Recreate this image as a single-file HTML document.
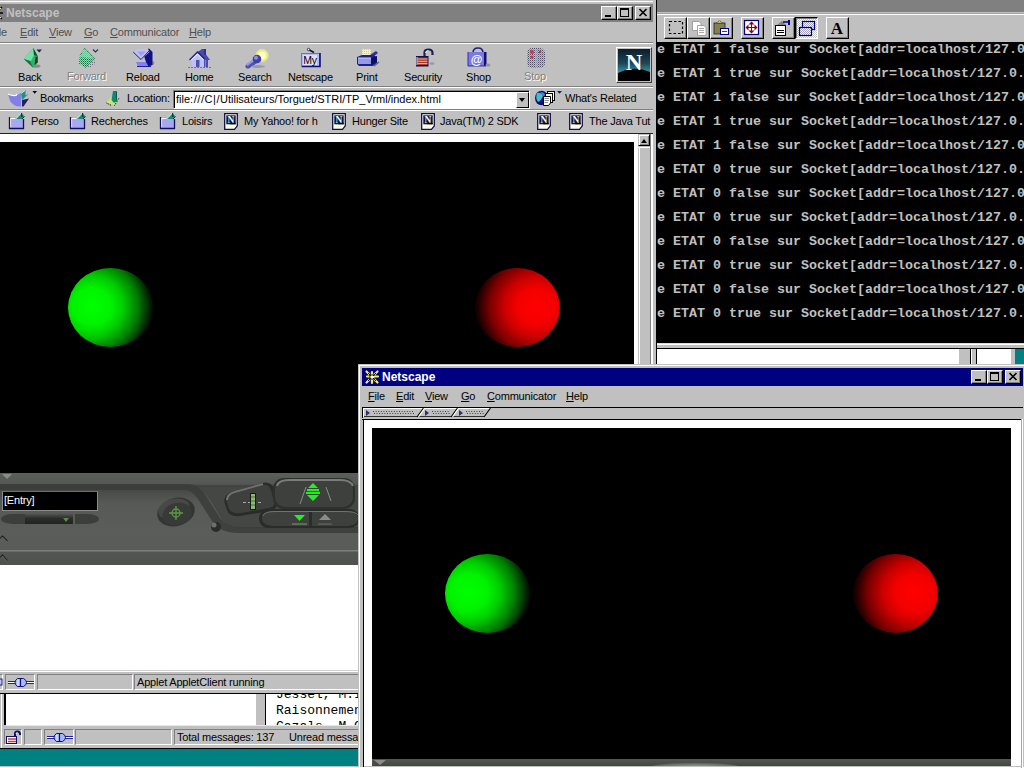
<!DOCTYPE html>
<html><head><meta charset="utf-8">
<style>
*{margin:0;padding:0;box-sizing:border-box}
html,body{width:1024px;height:768px;overflow:hidden;background:#c0c0c0;font-family:"Liberation Sans",sans-serif;font-size:11px;color:#000}
.a{position:absolute}
.t{position:absolute;white-space:pre;line-height:12px;letter-spacing:-0.2px}
.w{background:#fff}.k{background:#000}.g{background:#c0c0c0}.d{background:#808080}
.u{text-decoration:underline}
.con{position:absolute;left:657px;white-space:pre;font-family:"Liberation Mono",monospace;font-weight:bold;font-size:13.333px;line-height:12px;color:#c0c0c0}
.btn{position:absolute;width:16px;height:14px;background:#c0c0c0;border-top:1px solid #fff;border-left:1px solid #fff;border-right:1px solid #000;border-bottom:1px solid #000;box-shadow:inset -1px -1px 0 #808080}
.sunk{position:absolute;border-top:1px solid #808080;border-left:1px solid #808080;border-right:1px solid #fff;border-bottom:1px solid #fff}
.tb{position:absolute;width:23px;height:22px;background:#c0c0c0;border-top:1px solid #fff;border-left:1px solid #fff;border-right:1px solid #000;border-bottom:1px solid #000;box-shadow:inset -1px -1px 0 #808080}
</style></head><body>

<!-- ============ MAIL WINDOW (behind, bottom-left) ============ -->
<div class="a g" style="left:0;top:692px;width:360px;height:57px"></div>
<div class="a w" style="left:1px;top:692px;width:1px;height:56px"></div>
<div class="a k" style="left:4px;top:694px;width:2px;height:31px"></div>
<div class="a w" style="left:6px;top:694px;width:250px;height:31px"></div>
<div class="a w" style="left:6px;top:725px;width:352px;height:1px;opacity:.6"></div>
<div class="a k" style="left:265px;top:693px;width:1px;height:32px"></div>
<div class="a w" style="left:266px;top:693px;width:94px;height:32px"></div>
<div class="a" style="left:266px;top:693px;width:92px;height:32px;overflow:hidden"><div class="t" style="left:10px;top:-6px;font-family:'Liberation Mono',monospace;font-size:13px;line-height:16px;letter-spacing:0;color:#000">Jessel, M.I
Raisonnement
Cazals, M.C</div></div>
<div class="sunk" style="left:4px;top:729px;width:18px;height:16px"></div>
<div class="sunk" style="left:24px;top:729px;width:18px;height:16px"></div>
<div class="sunk" style="left:44px;top:729px;width:30px;height:16px"></div>
<div class="sunk" style="left:75px;top:729px;width:97px;height:16px"></div>
<div class="sunk" style="left:174px;top:729px;width:190px;height:16px"></div>
<div class="t" style="left:177px;top:731px">Total messages: 137</div>
<div class="t" style="left:289px;top:731px">Unread messa</div>
<svg class="a" style="left:5px;top:730px" width="17" height="15" viewBox="0 0 17 15"><path d="M10 6V3.5Q10 1.5 12.5 1.5Q15 1.5 15 4V5" fill="none" stroke="#101060" stroke-width="2"/><path d="M11 4Q11 2.5 12.5 2.5" fill="none" stroke="#fff" stroke-width=".8"/><rect x="1.5" y="6.5" width="10" height="7" fill="#fff" stroke="#101060"/><path d="M3 9H11M3 11.5H11" stroke="#c04040" stroke-width="1.3"/></svg>
<svg class="a" style="left:46px;top:731px" width="28" height="13" viewBox="0 0 28 13"><path d="M1 5.5H27M1 7.5H27" stroke="#2020a0" stroke-width="1"/><path d="M1 6.5H27" stroke="#fff" stroke-width="1"/><path d="M10.5 2.5H16.5Q19.5 4 19.5 6.5Q19.5 9 16.5 10.5H10.5Q8 9 8 6.5Q8 4 10.5 2.5Z" fill="#a8b8ff" stroke="#101080" stroke-width="1"/><path d="M11 3.5V9.5" stroke="#e8f0ff" stroke-width="1.2"/><path d="M13.5 2V11" stroke="#101080" stroke-width="1.2"/></svg>
<div class="a k" style="left:0;top:748px;width:360px;height:1px"></div>
<div class="a" style="left:0;top:749px;width:360px;height:17px;background:#008080"></div>
<div class="a" style="left:0;top:766px;width:1024px;height:1px;background:#c0c0c0"></div>
<div class="a w" style="left:0;top:767px;width:1024px;height:1px"></div>

<!-- ============ WINDOW 1 ============ -->
<div class="a g" style="left:0;top:0;width:656px;height:693px"></div>
<div class="a w" style="left:0;top:1px;width:653px;height:1px"></div>
<div class="a d" style="left:0;top:4px;width:653px;height:18px"></div>
<svg class="a" style="left:0;top:5px" width="4" height="16" viewBox="13 0 4 16"><g stroke="#000" stroke-width="1.3"><path d="M2 2L15 14M15 2L2 14M8.5 1V15M1 8H16"/></g><g stroke="#e8e8a0" stroke-width="1"><path d="M4 3L14 13M14 3L4 13"/></g></svg>
<div class="t" style="left:6px;top:7px;font-weight:bold;font-size:12px;color:#c0c0c0;letter-spacing:0">Netscape</div>
<div class="btn" style="left:601px;top:6px"></div>
<div class="btn" style="left:617px;top:6px"></div>
<div class="btn" style="left:635px;top:6px"></div>
<svg class="a" style="left:601px;top:6px" width="50" height="14" viewBox="0 0 50 14">
 <rect x="4" y="9" width="6" height="2" fill="#000"/>
 <rect x="19.5" y="2.5" width="8" height="8" fill="none" stroke="#000" stroke-width="1"/><rect x="19" y="2" width="9" height="2" fill="#000"/>
 <path d="M38.5 3L45.5 10M45.5 3L38.5 10" stroke="#000" stroke-width="1.6"/>
</svg>
<!-- menu -->
<div class="t" style="left:-10px;top:26px;color:#505050"><span class="u">F</span>ile</div>
<div class="t" style="left:20px;top:26px;color:#505050"><span class="u">E</span>dit</div>
<div class="t" style="left:49px;top:26px;color:#505050"><span class="u">V</span>iew</div>
<div class="t" style="left:84px;top:26px;color:#505050"><span class="u">G</span>o</div>
<div class="t" style="left:110px;top:26px;color:#505050"><span class="u">C</span>ommunicator</div>
<div class="t" style="left:189px;top:26px;color:#505050"><span class="u">H</span>elp</div>
<div class="a d" style="left:0;top:42px;width:653px;height:1px"></div>
<div class="a w" style="left:0;top:43px;width:653px;height:1px"></div>
<!-- toolbar labels -->
<div class="t" style="left:18px;top:71px">Back</div>
<div class="t" style="left:68px;top:71px;color:#fff">Forward</div>
<div class="t" style="left:67px;top:70px;color:#808080">Forward</div>
<div class="t" style="left:126px;top:71px">Reload</div>
<div class="t" style="left:185px;top:71px">Home</div>
<div class="t" style="left:238px;top:71px">Search</div>
<div class="t" style="left:288px;top:71px">Netscape</div>
<div class="t" style="left:356px;top:71px">Print</div>
<div class="t" style="left:404px;top:71px">Security</div>
<div class="t" style="left:466px;top:71px">Shop</div>
<div class="t" style="left:525px;top:71px;color:#fff">Stop</div>
<div class="t" style="left:524px;top:70px;color:#808080">Stop</div>
<!-- toolbar icons -->
<svg class="a" style="left:0;top:44px" width="656" height="90" viewBox="0 44 656 90">
 <defs>
  <pattern id="dith" width="2" height="2" patternUnits="userSpaceOnUse"><rect width="1" height="1" fill="#40a070"/><rect x="1" y="1" width="1" height="1" fill="#206040"/><rect x="1" width="1" height="1" fill="#90e0b8"/></pattern><pattern id="dithg" width="2" height="2" patternUnits="userSpaceOnUse"><rect width="1" height="1" fill="#707080"/></pattern>
  <pattern id="dith2" width="2" height="2" patternUnits="userSpaceOnUse"><rect width="1" height="1" fill="#303050"/><rect x="1" y="1" width="1" height="1" fill="#8080c0"/></pattern>
  <symbol id="fold" viewBox="0 0 16 16"><rect x="1" y="5" width="14" height="11" fill="#202070"/><rect x="1.5" y="5.5" width="12.5" height="9.5" fill="#b8b8f8"/><path d="M9 1L15 4L11 8Z" fill="#108060"/><path d="M9 1L12 3L11 8Z" fill="#30c090"/></symbol>
  <symbol id="npage" viewBox="0 0 14 17"><path d="M.7 .7H13.3V12.8L10.5 16.3H.7Z" fill="#fff" stroke="#101040" stroke-width="1.3"/><rect x="2.3" y="2.3" width="9.4" height="9" fill="#0a1838"/><path d="M6 11.3Q9 8 11.7 10V11.3Z" fill="#000"/><text x="7" y="9.6" font-family="Liberation Serif" font-weight="bold" font-size="9.5" fill="#f0f8ff" text-anchor="middle">N</text><rect x="2" y="12.3" width="7.5" height="2.6" fill="#ffffc8"/></symbol>
 </defs>
 <!-- back -->
 <ellipse cx="36" cy="66" rx="4.5" ry="1.8" fill="#8a8a8a"/>
 <path d="M33.3 48L23.8 59L33 67.4L37.7 62.5L37.7 56.2Z" fill="#30b068"/>
 <path d="M33.3 48L23.8 59L31 61L34 55Z" fill="#70e0a8"/>
 <path d="M33.3 48L37.7 56.2L34 55Z" fill="#0c5028"/>
 <path d="M37.7 56.2V62.5L34.5 65L35.5 57Z" fill="#0a4020"/>
 <path d="M23.8 59L33 67.4L30 61Z" fill="#1a7040"/>
 <path d="M36.5 49.5H42L39.2 52.5Z" fill="#202050"/>
 <!-- forward -->
 <path d="M85 67.5L94 60L96 63L90 68Z" fill="url(#dithg)"/>
 <path d="M84.5 48.2L94.5 58.4L85.6 67.4L79 63.5L80 54Z" fill="url(#dith)"/>
 <path d="M84.5 48.2L94.5 58.4L80 57Z" fill="#80e0b0" opacity=".75"/>
 <path d="M84.5 48.2L94.5 58.4L85.6 67.4" fill="none" stroke="#205030" stroke-width=".9" stroke-dasharray="1 1"/>
 <path d="M93 49.5L95.5 52L98 49.5" fill="none" stroke="#303050" stroke-width="1.1"/>
 <!-- reload -->
 <ellipse cx="152" cy="63" rx="2.5" ry="2" fill="#909090"/>
 <path d="M136 62H147L151 66.5H138Z" fill="#8080f0"/>
 <path d="M137 66.5H151" stroke="#2020a0" stroke-width="1"/>
 <path d="M146 50L149 48.5L152.5 52V65L148.5 66.5L146 62L144 56Z" fill="#10108a"/>
 <path d="M133.2 52L138 49H148L149.5 52L141 59.5Z" fill="#c0c0f8"/>
 <path d="M133.2 52L141 59.5L149 51" fill="none" stroke="#202060" stroke-width="1"/>
 <path d="M137 51.5H146L141 56Z" fill="#9090e8" opacity=".7"/>
 <!-- home -->
 <path d="M189.5 60L197.5 52L204 58.5V67H192V60Z" fill="#c0c0ff"/>
 <path d="M204 58.5L197.5 52L202 49H205V53L210 60H208V67H204Z" fill="#4848b0"/>
 <path d="M189.5 60L197.5 52L204.5 59" fill="none" stroke="#202070" stroke-width="1.3"/>
 <path d="M191 60.5L197.5 54L203.5 60" fill="none" stroke="#fff" stroke-width=".8"/>
 <rect x="204" y="49" width="2" height="6" fill="#303090"/>
 <rect x="196" y="60" width="3.5" height="7" fill="#5050a8"/>
 <path d="M205.5 60V67" stroke="#8080e0" stroke-width="1.2"/>
 <path d="M188 67.5H211" stroke="#608870" stroke-width="1.2" stroke-dasharray="2 1"/>
 <!-- search -->
 <circle cx="262" cy="55.5" r="6.5" fill="#f0f080" opacity=".9"/>
 <circle cx="262" cy="55.5" r="4" fill="#ffffc0"/>
 <path d="M245.5 65.5L255 58L258.5 62L249 68.5Q245 69 245.5 65.5Z" fill="#5050b0"/>
 <path d="M246 64L255.5 57.5L257 59L247.5 66Z" fill="#9898e8"/>
 <circle cx="257" cy="59" r="4.3" fill="#4040a0"/>
 <circle cx="256" cy="57.8" r="2" fill="#9090e0"/>
 <ellipse cx="258" cy="66.5" rx="7" ry="1.5" fill="#9a9aaa"/>
 <!-- my netscape -->
 <path d="M308.5 49.5L314 52.5" stroke="#101030" stroke-width="1.6"/><circle cx="308.5" cy="49.5" r="1.2" fill="#fff" stroke="#101030" stroke-width=".8"/>
 <rect x="301.5" y="53.5" width="18" height="13" fill="#b8b8f8" stroke="#7070d0" stroke-width="1"/>
 <path d="M302 66.5H320V53" stroke="#101070" stroke-width="1.6" fill="none"/>
 <rect x="303" y="55" width="14" height="10" fill="#e0e0ff"/>
 <text x="310" y="63.5" font-family="Liberation Sans" font-size="10.5" fill="#000" text-anchor="middle" letter-spacing="-.3">My</text>
 <!-- print -->
 <path d="M362 49H371V55H362Z" fill="#f0f0c0"/>
 <path d="M362 49.5H371M362 51.5H371M362 53.5H371" stroke="#c8c8a0" stroke-width=".8" stroke-dasharray="1 1"/>
 <path d="M370 55L376 51L378 53L373 57Z" fill="#3030a0"/>
 <path d="M357 57L362 55H373L377 57V63L373 66H359L357 64Z" fill="#20208a"/>
 <path d="M358 58H371V64H358Z" fill="#9898e8"/>
 <path d="M358 58H371" stroke="#d0d0ff" stroke-width="1"/>
 <path d="M371 58L377 56V62L371 65Z" fill="#101060"/>
 <rect x="369" y="61" width="1.5" height="1.5" fill="#30c0a0"/>
 <path d="M374 66L379 62" stroke="#606070" stroke-width="1.5"/>
 <!-- security -->
 <path d="M424.5 56V52.5Q424.5 49.5 428.5 49.5Q432.5 49.5 432.5 53V55" fill="none" stroke="#202050" stroke-width="2.2"/>
 <path d="M425.5 53Q426 50.5 428.5 50.5" fill="none" stroke="#fff" stroke-width=".9"/>
 <ellipse cx="432" cy="63.5" rx="2.5" ry="1.3" fill="#9898b0"/>
 <rect x="416" y="56" width="12.5" height="10.5" fill="#101058"/>
 <rect x="417.5" y="57.5" width="10" height="7.5" fill="#a83828"/>
 <path d="M417.5 59H427.5M417.5 61.3H427.5M417.5 63.6H427.5" stroke="#e8b888" stroke-width="1"/>
 <path d="M417 57V65" stroke="#f0e0e0" stroke-width="1"/>
 <!-- shop -->
 <path d="M473 53Q473 48 478 48Q483 48 483 53" fill="none" stroke="#202080" stroke-width="1.6"/>
 <path d="M468 52H486V66H468Z" fill="#7878e8"/>
 <path d="M484 52H486.5V66H484Z" fill="#101070"/>
 <path d="M468 52V66H486" fill="none" stroke="#3030a0" stroke-width="1"/>
 <text x="476.5" y="63.5" font-family="Liberation Sans" font-weight="bold" font-size="12" fill="#fff" text-anchor="middle">@</text>
 <ellipse cx="488" cy="65" rx="2.5" ry="1.5" fill="#9090a8"/>
 <!-- stop -->
 <rect x="527" y="48" width="18" height="20" rx="5" fill="url(#dith2)" opacity=".8"/>
 <g fill="#e03040"><circle cx="532" cy="52" r="2"/><circle cx="532" cy="57" r="1.6"/><circle cx="540" cy="52" r="1.3"/></g>
 <path d="M536 49V67" stroke="#b0b0d0" stroke-width="1.5" opacity=".8"/>
 <!-- location row -->
 <path d="M8 94Q12 96 16 95.5L21 93V106.5Q14 107 10 101Z" fill="#8080e8"/>
 <path d="M8 94Q12 96 16 95.5L17 94" fill="none" stroke="#fff" stroke-width="1.2"/>
 <path d="M21 93L25.5 90L25.5 95.5L29 93.5L22 100Z" fill="#209080"/>
 <path d="M21 93.5L25 90.5" stroke="#e0fff0" stroke-width=".8"/>
 <path d="M22 100L29 98.5L23.5 106.5H22Z" fill="#202068"/>
 <path d="M32.5 91H37L34.7 93.8Z" fill="#000"/>
 <path d="M106.5 102.5L111 97L119 98.5L115 105.5Z" fill="#c8e870"/>
 <path d="M113 91H117V101L114 103L111.5 100Z" fill="#108878"/>
 <path d="M106.5 103L111.5 105.5M114.5 105.5L119 98" stroke="#000" stroke-width="1" stroke-dasharray="1 1"/>
 <path d="M116.5 92.5V100" stroke="#000" stroke-width=".8" stroke-dasharray="1 1"/>
 <ellipse cx="541.5" cy="98" rx="6.5" ry="7.3" fill="#101070"/>
 <path d="M537 93Q541 92 543 96Q541 101 538 102Q535 98 537 93Z" fill="#40c0c0"/>
 <path d="M540 91.5Q544 92 546 95L543 96Z" fill="#5080e0"/>
 <rect x="547.5" y="91.5" width="7" height="9" fill="#fff" stroke="#000" stroke-width="1"/>
 <rect x="545.5" y="93.5" width="7" height="9" fill="#fff" stroke="#000" stroke-width="1"/>
 <path d="M543.5 96.5H550.5V103L548.5 105.5H543.5Z" fill="#fff" stroke="#000" stroke-width="1"/>
 <path d="M544.5 98.5H549M544.5 100.5H549M544.5 102.5H548" stroke="#707070" stroke-width=".8"/>
 <path d="M557 91H562L559.5 93.8Z" fill="#202050"/>
 <!-- bookmark bar -->
<g transform="translate(0,0)">
 <path d="M9 117H15.5L16 119H24V129H9Z" fill="#a8a8f0"/>
 <path d="M10.5 127.5V118.5H15" stroke="#fff" stroke-width="1.2" fill="none"/>
 <path d="M9.5 117V129M9 128.5H24M23.5 119V129" stroke="#101060" stroke-width="1.3" fill="none"/>
 <path d="M15.5 119L21.5 113L24.5 116.5L22 119Z" fill="#188878"/>
 <path d="M15.5 119L21.5 113" stroke="#e8fff8" stroke-width=".9"/>
 <path d="M21.5 113L22 117M24.5 116.5L22 119" stroke="#003020" stroke-width="1"/>
</g>
<g transform="translate(61,0)">
 <path d="M9 117H15.5L16 119H24V129H9Z" fill="#a8a8f0"/>
 <path d="M10.5 127.5V118.5H15" stroke="#fff" stroke-width="1.2" fill="none"/>
 <path d="M9.5 117V129M9 128.5H24M23.5 119V129" stroke="#101060" stroke-width="1.3" fill="none"/>
 <path d="M15.5 119L21.5 113L24.5 116.5L22 119Z" fill="#188878"/>
 <path d="M15.5 119L21.5 113" stroke="#e8fff8" stroke-width=".9"/>
 <path d="M21.5 113L22 117M24.5 116.5L22 119" stroke="#003020" stroke-width="1"/>
</g>
<g transform="translate(151,0)">
 <path d="M9 117H15.5L16 119H24V129H9Z" fill="#a8a8f0"/>
 <path d="M10.5 127.5V118.5H15" stroke="#fff" stroke-width="1.2" fill="none"/>
 <path d="M9.5 117V129M9 128.5H24M23.5 119V129" stroke="#101060" stroke-width="1.3" fill="none"/>
 <path d="M15.5 119L21.5 113L24.5 116.5L22 119Z" fill="#188878"/>
 <path d="M15.5 119L21.5 113" stroke="#e8fff8" stroke-width=".9"/>
 <path d="M21.5 113L22 117M24.5 116.5L22 119" stroke="#003020" stroke-width="1"/>
</g>
 <use href="#npage" x="224" y="113" width="14" height="17"/>
 <use href="#npage" x="332" y="113" width="14" height="17"/>
 <use href="#npage" x="421" y="113" width="14" height="17"/>
 <use href="#npage" x="537" y="113" width="14" height="17"/>
 <use href="#npage" x="569" y="113" width="14" height="17"/>
</svg>
<!-- N logo -->
<div class="a" style="left:616px;top:47px;width:36px;height:36px;border-top:1px solid #fff;border-left:1px solid #fff;border-right:1px solid #404040;border-bottom:1px solid #404040;background:#c0c0c0"></div>
<svg class="a" style="left:618px;top:49px" width="32" height="32" viewBox="0 0 32 32">
 <defs><linearGradient id="sky" x1="0" y1="0" x2="0" y2="1"><stop offset="0" stop-color="#0c1c2c"/><stop offset=".45" stop-color="#1c4858"/><stop offset=".75" stop-color="#3a9aa8"/><stop offset="1" stop-color="#3a9aa8"/></linearGradient></defs>
 <rect width="32" height="32" fill="url(#sky)"/>
 <path d="M0 24 Q16 16 32 23 V32 H0Z" fill="#000"/>
 <text x="16" y="21" font-family="Liberation Serif" font-weight="bold" font-size="23" fill="#fff" text-anchor="middle">N</text>
</svg>
<div class="a d" style="left:0;top:86px;width:653px;height:1px"></div>
<div class="a w" style="left:0;top:87px;width:653px;height:1px"></div>
<!-- location bar -->
<div class="t" style="left:40px;top:92px">Bookmarks</div>
<div class="t" style="left:127px;top:92px">Location:</div>
<div class="a" style="left:173px;top:90px;width:357px;height:19px;background:#fff;border-top:1px solid #808080;border-left:1px solid #808080;border-right:1px solid #fff;border-bottom:1px solid #fff;box-shadow:inset 1px 1px 0 #000"></div>
<div class="t" style="left:176px;top:93px;letter-spacing:0">file<span style="letter-spacing:.55px">:///C|/</span>Utilisateurs/Torguet/STRI/TP_Vrml/index.html</div>
<div class="a" style="left:516px;top:92px;width:13px;height:16px;background:#c0c0c0;border-top:1px solid #fff;border-left:1px solid #fff;border-right:1px solid #000;border-bottom:1px solid #000"></div>
<div class="a" style="left:519px;top:98px;width:0;height:0;border-left:3.5px solid transparent;border-right:3.5px solid transparent;border-top:4px solid #000"></div>
<div class="t" style="left:565px;top:92px">What's Related</div>
<div class="a d" style="left:0;top:109px;width:653px;height:1px"></div>
<div class="a w" style="left:0;top:110px;width:653px;height:1px"></div>
<!-- bookmarks bar -->
<div class="t" style="left:31px;top:115px">Perso</div>
<div class="t" style="left:91px;top:115px">Recherches</div>
<div class="t" style="left:182px;top:115px">Loisirs</div>
<div class="t" style="left:244px;top:115px">My Yahoo! for h</div>
<div class="t" style="left:352px;top:115px">Hunger Site</div>
<div class="t" style="left:440px;top:115px">Java(TM) 2 SDK</div>
<div class="t" style="left:589px;top:115px">The Java Tut</div>
<div class="a" style="left:0;top:133px;width:653px;height:1px;background:#202020"></div>
<!-- content -->
<div class="a w" style="left:0;top:134px;width:638px;height:537px"></div>
<div class="a k" style="left:0;top:142px;width:634px;height:331px"></div>
<div class="a" style="left:68px;top:268px;width:85px;height:79px;border-radius:50%;background:radial-gradient(ellipse 74% 76% at 28% 48%,#00ff00 0%,#00f400 30%,#00cc00 50%,#007a00 74%,#002000 92%,#000800 100%)"></div>
<div class="a" style="left:475px;top:268px;width:85px;height:79px;border-radius:50%;background:radial-gradient(ellipse 74% 76% at 72% 49%,#ff0000 0%,#f40000 30%,#cc0000 50%,#7a0000 74%,#200000 92%,#080000 100%)"></div>
<!-- cosmo nav bar win1 -->
<div class="a" style="left:0;top:473px;width:634px;height:92px;background:linear-gradient(#5c5f5b 0px,#545753 11px,#3e413d 13px,#464945 16px,#565955 30px,#5a5d59 60px,#585b57 77px,#7c7f7a 77px,#7c7f7a 78px,#525551 79px,#4e514d 92px)"></div>
<div class="a" style="left:2px;top:474px;width:0;height:0;border-left:5px solid transparent;border-right:5px solid transparent;border-top:5px solid #8a8c88"></div>
<div class="a" style="left:2px;top:491px;width:96px;height:20px;background:#000;border:1px solid #8a8c88;border-top-color:#6a6c68"></div>
<div class="t" style="left:4px;top:494px;color:#fff">[Entry]</div>
<div class="a" style="left:1px;top:514px;width:24px;height:10px;background:#3c3e3b;border-radius:50% 0 0 50%"></div>
<div class="a" style="left:25px;top:513px;width:48px;height:11px;background:linear-gradient(#5a5c58,#2a2c2a 50%,#222422)"></div>
<div class="a" style="left:63px;top:518px;width:0;height:0;border-left:3.5px solid transparent;border-right:3.5px solid transparent;border-top:4px solid #5a8a50"></div>
<div class="a" style="left:75px;top:514px;width:24px;height:10px;background:#3c3e3b;border-radius:0 50% 50% 0"></div>
<svg class="a" style="left:0;top:532px" width="10" height="32" viewBox="0 532 10 32"><path d="M-1 539.5L2.5 536L7.5 541M-1 558.5L2.5 555L7.5 560.5" fill="none" stroke="#1a1c1a" stroke-width="1.1"/><path d="M-1 540.5L2.5 537L7.5 542M-1 559.5L2.5 556L7.5 561.5" fill="none" stroke="#7a7d79" stroke-width=".7" opacity=".6"/></svg>

<svg class="a" style="left:0;top:473px" width="358" height="91" viewBox="0 473 358 91">
 <path d="M195 487 Q205 490 212 503 L222 520 Q228 528 240 528 L358 528 L358 486 Z" fill="#454744"/>
 <path d="M0 484 L188 484 Q198 484 206 496 L220 518 Q226 527 240 527 L358 527 L358 533 L238 533 Q220 533 212 521 L198 499 Q192 490 184 490 L0 490 Z" fill="#3a3c39" opacity=".85"/>
 <ellipse cx="176" cy="512" rx="19" ry="14" transform="rotate(-15 176 512)" fill="#333532"/>
 <ellipse cx="174" cy="509" rx="16" ry="10" transform="rotate(-15 174 509)" fill="#5c5e5a" opacity=".5"/>
 <ellipse cx="177" cy="514" rx="15" ry="11" transform="rotate(-15 177 514)" fill="#383a37"/>
 <g stroke="#5a9a4a" stroke-width="1.3" fill="none"><circle cx="176" cy="513" r="4"/><path d="M169 513H183M176 506V520"/></g>
 <circle cx="216" cy="527" r="5" fill="#2a2c29"/><circle cx="214" cy="525" r="2.5" fill="#6e706c"/>
 <path d="M225 504 Q222 495 232 492 L262 483 Q271 481 274 489 L277 502 Q278 509 270 511 L240 516 Q229 517 227 510 Z" fill="#2a2c29"/>
 <path d="M227 503 Q225 496 233 494 L262 485 Q269 484 271 490 L274 502 Q275 507 269 508 L241 513 Q231 514 229 509 Z" fill="#3e403d"/>
 <path d="M227 500 Q227 494 235 492 L263 484" stroke="#80827e" stroke-width="2" fill="none" opacity=".8"/>
 <path d="M243 502.5H261" stroke="#a8aaa6" stroke-width="1" stroke-dasharray="3 2"/>
 <rect x="250.5" y="493.5" width="5" height="16" fill="#90b878" stroke="#10200a" stroke-width="1"/>
 <path d="M251 497H255M251 501H255M251 505H255" stroke="#4a6a38" stroke-width="1"/>
 <rect x="273" y="478" width="82" height="31" rx="11" fill="#2e302d"/>
 <rect x="275" y="479" width="78" height="28" rx="10" fill="#3e403d"/>
 <path d="M277 486 Q278 480 290 480 H340 Q351 480 353 486" stroke="#858783" stroke-width="2" fill="none" opacity=".85"/>
 <path d="M300 504L306 487M326 487L331 501" stroke="#8a8c88" stroke-width="1"/>
 <path d="M313 483L308 488H318Z M307 489H319V491H307Z M306 492H320V494H306Z M307 495H319L313 501Z" fill="#22ee22"/>
 <rect x="259" y="509" width="100" height="19" rx="9" fill="#2a2c29"/>
 <path d="M262 518 Q262 511 275 511 H309 V526 H275 Q262 526 262 518Z" fill="#3e403d"/>
 <path d="M312 511 H345 Q358 511 358 518 Q358 526 345 526 H312Z" fill="#3e403d"/>
 <path d="M263 516 Q264 511.5 275 511.5 H345 Q356 511.5 358 515" stroke="#70726e" stroke-width="1" fill="none"/>
 <path d="M294 515H305L299.5 521Z" fill="#22ee22"/><path d="M292 524H307" stroke="#7a9a70"/>
 <path d="M319 520H331L325 514Z" fill="#8a8c88"/><path d="M318 524H332" stroke="#6a6c68"/>
</svg>
<!-- scrollbar -->
<div class="a g" style="left:638px;top:134px;width:12px;height:537px"></div>
<div class="a" style="left:638px;top:134px;width:12px;height:12px;background:#c0c0c0;border-top:1px solid #c0c0c0;border-left:1px solid #c0c0c0;border-right:1px solid #000;border-bottom:1px solid #000;box-shadow:inset 1px 1px 0 #fff,inset -1px -1px 0 #808080"></div>
<div class="a" style="left:641px;top:139px;width:0;height:0;border-left:3.5px solid transparent;border-right:3.5px solid transparent;border-bottom:4px solid #000"></div>
<div class="a w" style="left:639px;top:147px;width:1px;height:524px"></div>
<div class="a w" style="left:638px;top:147px;width:12px;height:1px"></div>
<div class="a d" style="left:650px;top:134px;width:1px;height:537px"></div>
<div class="a w" style="left:651px;top:134px;width:2px;height:558px"></div>
<div class="a k" style="left:656px;top:0;width:1px;height:365px"></div>
<!-- status bar -->
<div class="a" style="left:0;top:670px;width:638px;height:1px;background:#d0d0d0"></div>
<div class="a w" style="left:0;top:671px;width:653px;height:1px"></div>
<div class="sunk" style="left:-14px;top:674px;width:17px;height:16px"></div>
<svg class="a" style="left:0;top:677px" width="3" height="9" viewBox="0 0 3 9"><rect x="-4" y="2" width="6" height="6" fill="#c0c0ff" stroke="#202070"/></svg>
<div class="sunk" style="left:5px;top:674px;width:30px;height:16px"></div>
<div class="sunk" style="left:37px;top:674px;width:96px;height:16px"></div>
<div class="sunk" style="left:134px;top:674px;width:520px;height:16px"></div>
<div class="t" style="left:137px;top:676px">Applet AppletClient running</div>
<svg class="a" style="left:7px;top:676px" width="28" height="13" viewBox="0 0 28 13"><path d="M1 5.5H27M1 7.5H27" stroke="#2020a0" stroke-width="1"/><path d="M1 6.5H27" stroke="#fff" stroke-width="1"/><path d="M10.5 2.5H16.5Q19.5 4 19.5 6.5Q19.5 9 16.5 10.5H10.5Q8 9 8 6.5Q8 4 10.5 2.5Z" fill="#a8b8ff" stroke="#101080" stroke-width="1"/><path d="M11 3.5V9.5" stroke="#e8f0ff" stroke-width="1.2"/><path d="M13.5 2V11" stroke="#101080" stroke-width="1.2"/></svg>

<div class="a k" style="left:0;top:693px;width:358px;height:1px"></div>

<!-- ============ CONSOLE WINDOW ============ -->
<div class="a d" style="left:657px;top:0;width:367px;height:12px"></div>
<div class="a g" style="left:657px;top:12px;width:367px;height:30px"></div>
<div class="a" style="left:657px;top:13px;width:367px;height:1px;background:#a0a0a0"></div>
<div class="a w" style="left:657px;top:14px;width:367px;height:1px"></div>
<div class="tb" style="left:664px;top:17px"></div>
<div class="tb" style="left:687px;top:17px"></div>
<div class="tb" style="left:710px;top:17px"></div>
<div class="tb" style="left:741px;top:17px"></div>
<div class="tb" style="left:772px;top:17px"></div>
<div class="a" style="left:795px;top:17px;width:23px;height:22px;border-top:1px solid #000;border-left:1px solid #000;border-right:1px solid #fff;border-bottom:1px solid #fff;box-shadow:inset 1px 1px 0 #808080;background:repeating-conic-gradient(#fff 0 25%,#c0c0c0 0 50%) 0 0/2px 2px"></div>
<div class="tb" style="left:826px;top:17px"></div>
<svg class="a" style="left:657px;top:15px" width="200" height="27" viewBox="657 15 200 27">
 <defs><pattern id="dith3" width="2" height="2" patternUnits="userSpaceOnUse"><rect width="2" height="2" fill="#fff"/><rect width="1" height="1" fill="#a0a0c0"/><rect x="1" y="1" width="1" height="1" fill="#a0a0c0"/></pattern></defs>
 <rect x="669.5" y="21.5" width="13" height="12" fill="none" stroke="#000" stroke-width="1.2" stroke-dasharray="2.5 2"/>
 <g fill="#fff" stroke="#909090" stroke-width=".8"><path d="M692.5 21.5H699L701 23.5V30.5H692.5Z"/><path d="M697.5 25.5H704L706 27.5V35.5H697.5Z"/></g>
 <g stroke="#909090" stroke-width=".8"><path d="M699 28.5H704M699 30.5H704M699 32.5H704"/></g>
 <rect x="714" y="23" width="11" height="11" fill="#808050" stroke="#202020" stroke-width=".8"/>
 <path d="M716.5 23Q719.5 19 722.5 23Z" fill="#ffff80" stroke="#404020" stroke-width=".7"/>
 <rect x="720.5" y="28.5" width="8" height="6" fill="#fff" stroke="#000080" stroke-width="1"/>
 <path d="M722 31.5H727" stroke="#000080" stroke-width=".8"/>
 <rect x="744.5" y="20.5" width="14" height="14" fill="#fff" stroke="#000080" stroke-width="1.2"/>
 <g fill="#900000"><path d="M751.5 21.5L748.5 24.5H754.5Z"/><path d="M751.5 33.5L748.5 30.5H754.5Z"/><path d="M745.5 27.5L748.5 24.5V30.5Z"/><path d="M757.5 27.5L754.5 24.5V30.5Z"/></g>
 <path d="M751.5 24V31M748 27.5H755" stroke="#900000" stroke-width="1"/>
 <rect x="775.5" y="25.5" width="10" height="10" fill="#fff" stroke="#000" stroke-width="1"/>
 <path d="M777 30.5H784M777 32.5H784" stroke="#000" stroke-width="1"/>
 <path d="M777 25L782 21L786 25Z" fill="#808080"/>
 <path d="M783 22H789" stroke="#000080" stroke-width="1.5"/><rect x="788" y="20" width="2" height="5" fill="#000080"/>
 <rect x="802.5" y="21.5" width="12" height="8" fill="url(#dith3)" stroke="#000080" stroke-width="1.2"/>
 <rect x="799.5" y="27.5" width="12" height="8" fill="url(#dith3)" stroke="#000080" stroke-width="1.2"/>
 <text x="837" y="34" font-family="Liberation Serif" font-weight="bold" font-size="17" fill="#000" text-anchor="middle">A</text>
</svg>
<div class="a k" style="left:657px;top:42px;width:367px;height:301px"></div>
<div class="con" style="top:44px">e ETAT 1 false sur Socket[addr=localhost/127.0</div>
<div class="con" style="top:68px">e ETAT 1 true sur Socket[addr=localhost/127.0.</div>
<div class="con" style="top:92px">e ETAT 1 false sur Socket[addr=localhost/127.0</div>
<div class="con" style="top:116px">e ETAT 1 true sur Socket[addr=localhost/127.0.</div>
<div class="con" style="top:140px">e ETAT 1 false sur Socket[addr=localhost/127.0</div>
<div class="con" style="top:164px">e ETAT 0 true sur Socket[addr=localhost/127.0.</div>
<div class="con" style="top:188px">e ETAT 0 false sur Socket[addr=localhost/127.0</div>
<div class="con" style="top:212px">e ETAT 0 true sur Socket[addr=localhost/127.0.</div>
<div class="con" style="top:236px">e ETAT 0 false sur Socket[addr=localhost/127.0</div>
<div class="con" style="top:260px">e ETAT 0 true sur Socket[addr=localhost/127.0.</div>
<div class="con" style="top:284px">e ETAT 0 false sur Socket[addr=localhost/127.0</div>
<div class="con" style="top:308px">e ETAT 0 true sur Socket[addr=localhost/127.0.</div>
<div class="a" style="left:657px;top:343px;width:367px;height:1px;background:#dcdcdc"></div>
<div class="a w" style="left:657px;top:344px;width:367px;height:1px"></div>
<div class="a k" style="left:657px;top:348px;width:367px;height:1px"></div>
<div class="a w" style="left:657px;top:349px;width:302px;height:15px"></div>
<div class="a k" style="left:970px;top:349px;width:1px;height:15px"></div>
<div class="a w" style="left:971px;top:349px;width:1px;height:15px"></div>
<div class="a k" style="left:976px;top:349px;width:1px;height:15px"></div>
<div class="a w" style="left:977px;top:349px;width:34px;height:15px"></div>
<div class="a" style="left:1015px;top:349px;width:9px;height:15px;background:#008080"></div>

<!-- ============ WINDOW 2 ============ -->
<div class="a g" style="left:358px;top:364px;width:666px;height:404px"></div>
<div class="a w" style="left:359px;top:365px;width:665px;height:1px"></div>
<div class="a w" style="left:359px;top:365px;width:1px;height:403px"></div>
<div class="a" style="left:362px;top:368px;width:661px;height:18px;background:#000080"></div>
<div class="t" style="left:382px;top:371px;font-weight:bold;font-size:12px;color:#fff;letter-spacing:0">Netscape</div>
<div class="btn" style="left:971px;top:370px"></div>
<div class="btn" style="left:987px;top:370px"></div>
<div class="btn" style="left:1005px;top:370px"></div>
<svg class="a" style="left:971px;top:370px" width="50" height="14" viewBox="0 0 50 14">
 <rect x="4" y="9" width="6" height="2" fill="#000"/>
 <rect x="19.5" y="2.5" width="8" height="8" fill="none" stroke="#000" stroke-width="1"/><rect x="19" y="2" width="9" height="2" fill="#000"/>
 <path d="M38.5 3L45.5 10M45.5 3L38.5 10" stroke="#000" stroke-width="1.6"/>
</svg>
<div class="t" style="left:368px;top:390px"><span class="u">F</span>ile</div>
<div class="t" style="left:396px;top:390px"><span class="u">E</span>dit</div>
<div class="t" style="left:425px;top:390px"><span class="u">V</span>iew</div>
<div class="t" style="left:461px;top:390px"><span class="u">G</span>o</div>
<div class="t" style="left:487px;top:390px"><span class="u">C</span>ommunicator</div>
<div class="t" style="left:566px;top:390px"><span class="u">H</span>elp</div>
<div class="a k" style="left:362px;top:407px;width:661px;height:1px"></div>
<div class="a k" style="left:362px;top:419px;width:659px;height:1px"></div>
<!-- tabs strip -->
<svg class="a" style="left:362px;top:408px" width="140" height="11" viewBox="362 408 140 11">
 <path d="M363 408H423L417 417H363Z" fill="#c0c0c0"/>
 <path d="M424 408H457L451 417H418Z" fill="#c0c0c0"/>
 <path d="M458 408H490L484 417H452Z" fill="#c0c0c0"/>
 <path d="M363 408.5H490" stroke="#fff" stroke-width="1"/>
 <path d="M363 416.5H484" stroke="#303030" stroke-width="1"/>
 <path d="M363.5 408V417" stroke="#fff" stroke-width="1"/>
 <path d="M362.5 408V418" stroke="#000" stroke-width="1"/>
 <g stroke-width="1.1"><path d="M423.5 408L417 417" stroke="#000"/><path d="M424.5 408.5L418.5 417" stroke="#fff"/>
 <path d="M457.5 408L451 417" stroke="#000"/><path d="M458.5 408.5L452.5 417" stroke="#fff"/>
 <path d="M490.5 408L484 417" stroke="#000"/></g>
 <g fill="#303070"><path d="M366 410L370 413L366 416Z"/><path d="M425 410L429 413L425 416Z"/><path d="M459 410L463 413L459 416Z"/></g>
 <g fill="#404040"><rect x="373" y="411" width="1" height="1"/><rect x="374" y="413" width="1" height="1"/><rect x="375.6" y="411" width="1" height="1"/><rect x="376.6" y="413" width="1" height="1"/><rect x="378.20000000000005" y="411" width="1" height="1"/><rect x="379.20000000000005" y="413" width="1" height="1"/><rect x="380.80000000000007" y="411" width="1" height="1"/><rect x="381.80000000000007" y="413" width="1" height="1"/><rect x="383.4000000000001" y="411" width="1" height="1"/><rect x="384.4000000000001" y="413" width="1" height="1"/><rect x="386.0000000000001" y="411" width="1" height="1"/><rect x="387.0000000000001" y="413" width="1" height="1"/><rect x="388.60000000000014" y="411" width="1" height="1"/><rect x="389.60000000000014" y="413" width="1" height="1"/><rect x="391.20000000000016" y="411" width="1" height="1"/><rect x="392.20000000000016" y="413" width="1" height="1"/><rect x="393.8000000000002" y="411" width="1" height="1"/><rect x="394.8000000000002" y="413" width="1" height="1"/><rect x="396.4000000000002" y="411" width="1" height="1"/><rect x="397.4000000000002" y="413" width="1" height="1"/><rect x="399.0000000000002" y="411" width="1" height="1"/><rect x="400.0000000000002" y="413" width="1" height="1"/><rect x="401.60000000000025" y="411" width="1" height="1"/><rect x="402.60000000000025" y="413" width="1" height="1"/><rect x="404.2000000000003" y="411" width="1" height="1"/><rect x="405.2000000000003" y="413" width="1" height="1"/><rect x="406.8000000000003" y="411" width="1" height="1"/><rect x="407.8000000000003" y="413" width="1" height="1"/><rect x="409.4000000000003" y="411" width="1" height="1"/><rect x="410.4000000000003" y="413" width="1" height="1"/><rect x="412.00000000000034" y="411" width="1" height="1"/><rect x="413.00000000000034" y="413" width="1" height="1"/><rect x="432" y="411" width="1" height="1"/><rect x="433" y="413" width="1" height="1"/><rect x="434.6" y="411" width="1" height="1"/><rect x="435.6" y="413" width="1" height="1"/><rect x="437.20000000000005" y="411" width="1" height="1"/><rect x="438.20000000000005" y="413" width="1" height="1"/><rect x="439.80000000000007" y="411" width="1" height="1"/><rect x="440.80000000000007" y="413" width="1" height="1"/><rect x="442.4000000000001" y="411" width="1" height="1"/><rect x="443.4000000000001" y="413" width="1" height="1"/><rect x="445.0000000000001" y="411" width="1" height="1"/><rect x="446.0000000000001" y="413" width="1" height="1"/><rect x="447.60000000000014" y="411" width="1" height="1"/><rect x="448.60000000000014" y="413" width="1" height="1"/><rect x="466" y="411" width="1" height="1"/><rect x="467" y="413" width="1" height="1"/><rect x="468.6" y="411" width="1" height="1"/><rect x="469.6" y="413" width="1" height="1"/><rect x="471.20000000000005" y="411" width="1" height="1"/><rect x="472.20000000000005" y="413" width="1" height="1"/><rect x="473.80000000000007" y="411" width="1" height="1"/><rect x="474.80000000000007" y="413" width="1" height="1"/><rect x="476.4000000000001" y="411" width="1" height="1"/><rect x="477.4000000000001" y="413" width="1" height="1"/><rect x="479.0000000000001" y="411" width="1" height="1"/><rect x="480.0000000000001" y="413" width="1" height="1"/><rect x="481.60000000000014" y="411" width="1" height="1"/><rect x="482.60000000000014" y="413" width="1" height="1"/></g>
</svg>
<!-- title icon win2 -->
<svg class="a" style="left:364px;top:369px" width="16" height="16" viewBox="0 0 16 16">
 <g stroke="#f0f070" stroke-width="2.2" stroke-linecap="round"><path d="M2.5 2.5L13.5 13.5M13.5 2.5L2.5 13.5M3 7.5H14M8 3V14"/></g>
 <g stroke="#000" stroke-width="1"><path d="M4 4L12 12M12 4L4 12M5 6H11M5 10H11M6 5V11"/></g>
 <circle cx="8" cy="8" r="1.5" fill="#fff"/>
</svg>

<div class="a k" style="left:363px;top:419px;width:1px;height:349px"></div>
<div class="a w" style="left:364px;top:420px;width:657px;height:346px"></div>
<div class="a k" style="left:372px;top:428px;width:639px;height:331px"></div>
<div class="a" style="left:445px;top:554px;width:85px;height:79px;border-radius:50%;background:radial-gradient(ellipse 74% 76% at 28% 48%,#00ff00 0%,#00f400 30%,#00cc00 50%,#007a00 74%,#002000 92%,#000800 100%)"></div>
<div class="a" style="left:853px;top:554px;width:85px;height:79px;border-radius:50%;background:radial-gradient(ellipse 74% 76% at 72% 49%,#ff0000 0%,#f40000 30%,#cc0000 50%,#7a0000 74%,#200000 92%,#080000 100%)"></div>
<div class="a" style="left:372px;top:759px;width:639px;height:7px;background:linear-gradient(#555753,#444643)"></div>
<div class="a" style="left:374px;top:760px;width:0;height:0;border-left:6px solid transparent;border-right:6px solid transparent;border-top:5px solid #8a8c88"></div>
<div class="a" style="left:640px;top:759px;width:110px;height:7px;overflow:hidden"><div class="a" style="left:10px;top:4px;width:90px;height:8px;border-radius:50%;background:radial-gradient(ellipse at 50% 50%,#a0a29e,#6a6c68 60%,#50524f 100%)"></div></div>
<div class="a w" style="left:358px;top:767px;width:666px;height:1px"></div>
<div class="a" style="left:1021px;top:419px;width:1px;height:349px;background:#a8a8a8"></div>
<div class="a w" style="left:1022px;top:419px;width:1px;height:349px"></div>

</body></html>
